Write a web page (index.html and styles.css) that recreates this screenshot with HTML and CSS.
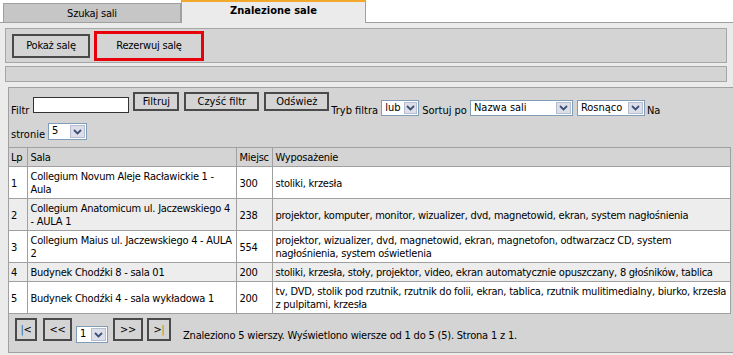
FILE: index.html
```html
<!DOCTYPE html>
<html lang="pl">

<head>
  <meta charset="UTF-8">
  <title>Znalezione sale</title>
  <link rel="stylesheet" href="styles.css">
</head>

<body>
  <div class="tabs">
    <div class="tab-edge"></div>
    <div class="tab tab-off">Szukaj sali</div>
    <div class="tab tab-on">Znalezione sale</div>
    <div class="tab-fill"></div>
  </div>

  <div class="panel">
    <div class="actions">
      <button class="btn btn-show">Pokaż salę</button>
      <button class="btn btn-book">Rezerwuj salę</button>
    </div>
    <div class="bar"></div>

    <div class="grid">
      <div class="toolbar">
        <div class="tool-row">
          <span class="lbl">Filtr</span>
          <input class="filter-input" type="text">
          <button class="btn btn-small w-filtruj">Filtruj</button>
          <button class="btn btn-small w-clear">Czyść filtr</button>
          <button class="btn btn-small w-refresh">Odśwież</button>
          <span class="lbl lbl-mode">Tryb filtra</span>
          <span class="select w-lub"><span class="val">lub</span><span class="arrow"><svg width="9" height="6" viewBox="0 0 9 6"><path d="M1 1 L4.5 4.5 L8 1" stroke="#3d4f75" stroke-width="1.8" fill="none"/></svg></span></span>
          <span class="lbl lbl-sort">Sortuj po</span>
          <span class="select w-sort"><span class="val">Nazwa sali</span><span class="arrow"><svg width="9" height="6" viewBox="0 0 9 6"><path d="M1 1 L4.5 4.5 L8 1" stroke="#3d4f75" stroke-width="1.8" fill="none"/></svg></span></span>
          <span class="select w-order"><span class="val">Rosnąco</span><span class="arrow"><svg width="9" height="6" viewBox="0 0 9 6"><path d="M1 1 L4.5 4.5 L8 1" stroke="#3d4f75" stroke-width="1.8" fill="none"/></svg></span></span>
          <span class="lbl lbl-na">Na</span>
        </div>
        <div class="tool-row row2">
          <span class="lbl">stronie</span>
          <span class="select w-page"><span class="val">5</span><span class="arrow"><svg width="9" height="6" viewBox="0 0 9 6"><path d="M1 1 L4.5 4.5 L8 1" stroke="#3d4f75" stroke-width="1.8" fill="none"/></svg></span></span>
        </div>
      </div>

      <table class="rooms">
        <colgroup>
          <col class="c-lp">
          <col class="c-sala">
          <col class="c-miejsc">
          <col>
        </colgroup>
        <thead>
          <tr>
            <th>Lp</th>
            <th>Sala</th>
            <th>Miejsc</th>
            <th>Wyposażenie</th>
          </tr>
        </thead>
        <tbody>
          <tr>
            <td>1</td>
            <td>Collegium Novum Aleje Racławickie 1 - Aula</td>
            <td>300</td>
            <td>stoliki, krzesła</td>
          </tr>
          <tr class="alt">
            <td>2</td>
            <td>Collegium Anatomicum ul. Jaczewskiego 4 - AULA 1</td>
            <td>238</td>
            <td>projektor, komputer, monitor, wizualizer, dvd, magnetowid, ekran, system nagłośnienia</td>
          </tr>
          <tr>
            <td>3</td>
            <td>Collegium Maius ul. Jaczewskiego 4 - AULA 2</td>
            <td>554</td>
            <td>projektor, wizualizer, dvd, magnetowid, ekran, magnetofon, odtwarzacz CD, system nagłośnienia, system oświetlenia</td>
          </tr>
          <tr class="alt">
            <td>4</td>
            <td>Budynek Chodźki 8 - sala 01</td>
            <td>200</td>
            <td>stoliki, krzesła, stoły, projektor, video, ekran automatycznie opuszczany, 8 głośników, tablica</td>
          </tr>
          <tr>
            <td>5</td>
            <td>Budynek Chodźki 4 - sala wykładowa 1</td>
            <td>200</td>
            <td>tv, DVD, stolik pod rzutnik, rzutnik do folii, ekran, tablica, rzutnik mulitimedialny, biurko, krzesła z pulpitami, krzesła</td>
          </tr>
        </tbody>
      </table>

      <div class="pager">
        <button class="btn pg w-first"><span class="bar-blue">|</span>&lt;</button>
        <button class="btn pg w-prev">&lt;&lt;</button>
        <span class="select w-pg"><span class="val">1</span><span class="arrow"><svg width="9" height="6" viewBox="0 0 9 6"><path d="M1 1 L4.5 4.5 L8 1" stroke="#3d4f75" stroke-width="1.8" fill="none"/></svg></span></span>
        <button class="btn pg w-next">&gt;&gt;</button>
        <button class="btn pg w-last">&gt;<span class="bar-orange">|</span></button>
        <span class="summary">Znaleziono 5 wierszy. Wyświetlono wiersze od 1 do 5 (5). Strona 1 z 1.</span>
      </div>
    </div>
  </div>
</body>

</html>
```

FILE: styles.css
```css
body {
  margin: 0;
  font-family: "DejaVu Sans Condensed", "DejaVu Sans", sans-serif;
  font-size: 11px;
  letter-spacing: -0.2px;
  color: #000;
  background: #fff;
  width: 733px;
  height: 355px;
  overflow: hidden;
}

/* tabs */
.tabs {
  display: flex;
  align-items: flex-end;
  height: 23px;
}

.tab-edge {
  width: 3px;
  border-bottom: 1px solid #a0a0a0;
}

.tab {
  text-align: center;
  box-sizing: border-box;
}

.tab-off {
  width: 178px;
  height: 20px;
  line-height: 19px;
  background: #c6c6c6;
  border: 1px solid #a0a0a0;
}

.tab-on {
  width: 185px;
  height: 23px;
  padding-top: 2px;
  font-weight: bold;
  letter-spacing: 0;
  background: #ebebeb;
  border: 1px solid #a0a0a0;
  border-top: 2px solid #f2a92c;
  border-bottom: none;
}

.tab-fill {
  flex: 1;
  border-bottom: 1px solid #a0a0a0;
}

/* panel */
.panel {
  background: #ebebeb;
  height: 332px;
  padding: 5px 0 0 5px;
  box-sizing: border-box;
}

.actions {
  display: flex;
  align-items: center;
  gap: 4px;
  width: 722px;
  height: 35px;
  box-sizing: border-box;
  padding: 0 6px;
  background: #d4d4d4;
  border: 1px solid #a6a6a6;
}

.bar {
  width: 722px;
  height: 16px;
  box-sizing: border-box;
  margin-top: 3px;
  background: #d4d4d4;
  border: 1px solid #a6a6a6;
}

.btn {
  font-family: inherit;
  font-size: 11px;
  letter-spacing: inherit;
  color: #000;
  background: #d4d4d4;
  border: 2px solid #4a4a4a;
  padding: 0;
  box-sizing: border-box;
}

.btn-show {
  width: 78px;
  height: 24px;
}

.btn-book {
  width: 110px;
  height: 30px;
  border: 3px solid #e8000b;
}

/* grid */
.grid {
  margin: 5px 0 0 3px;
  width: 730px;
  height: 266px;
  box-sizing: border-box;
  background: #d4d4d4;
  border: 1px solid #a0a0a0;
  border-right: none;
}

.toolbar {
  padding: 3px 0 2px 2px;
  letter-spacing: 0;
}

.tool-row {
  display: flex;
  align-items: flex-end;
  height: 26px;
}

.row2 {
  height: 28px;
}

.lbl {
  line-height: 13px;
  margin-bottom: 0;
}

.row2 .lbl {
  margin-bottom: 4px;
}

.filter-input {
  width: 96px;
  height: 16px;
  box-sizing: border-box;
  border: 1px solid #333;
  margin: 0 0 4px 4px;
  padding: 0;
}

.btn-small {
  height: 19px;
  margin-bottom: 6px;
}

.w-filtruj { width: 46px; margin-left: 4px; }
.w-clear { width: 75px; margin-left: 5px; }
.w-refresh { width: 65px; margin-left: 5px; }
.lbl-mode { margin-left: 2px; }
.lbl-sort { margin-left: 3px; }
.lbl-na { margin-left: 2px; }

.select {
  display: inline-flex;
  height: 16px;
  box-sizing: border-box;
  border: 1px solid #7f9db9;
  background: #fff;
  margin-bottom: 1px;
}

.select .val {
  flex: 1;
  padding: 0 3px;
  line-height: 13px;
}

.select .arrow {
  width: 15px;
  margin: 1px;
  box-sizing: border-box;
  background: #dcdfe9;
  border: 1px solid #b5bdd1;
  display: flex;
  align-items: center;
  justify-content: center;
}

.w-lub { width: 38px; margin-left: 3px; }
.w-sort { width: 103px; margin-left: 3px; }
.w-order { width: 68px; margin-left: 4px; }
.w-page { width: 39px; height: 17px; margin: 0 0 5px 3px; }

/* table */
.rooms {
  width: 722px;
  table-layout: fixed;
  border-collapse: collapse;
}

.c-lp { width: 18px; }
.c-sala { width: 209px; }
.c-miejsc { width: 36px; }

.rooms th,
.rooms td {
  border: 1px solid #a0a0a0;
  padding: 3px 1px 2px 3px;
  line-height: 13px;
  letter-spacing: -0.25px;
  text-align: left;
  font-weight: normal;
  vertical-align: middle;
}

.rooms th:first-child,
.rooms td:first-child {
  border-left: none;
  padding-left: 2px;
}

.rooms th {
  background: #d4d4d4;
}

.rooms td {
  background: #fff;
}

.rooms tr.alt td {
  background: #ededed;
}

/* pager */
.pager {
  display: flex;
  align-items: flex-start;
  padding: 4px 0 0 6px;
}

.pg {
  height: 23px;
}

.w-first { width: 22px; }
.w-prev { width: 29px; margin-left: 6px; }
.w-pg { width: 32px; height: 17px; margin: 8px 0 0 4px; }
.w-next { width: 30px; margin-left: 5px; }
.w-last { width: 24px; margin-left: 4px; }

.bar-blue { color: #2a5fa8; }
.bar-orange { color: #d07a10; }

.summary {
  margin: 11px 0 0 12px;
}
```
